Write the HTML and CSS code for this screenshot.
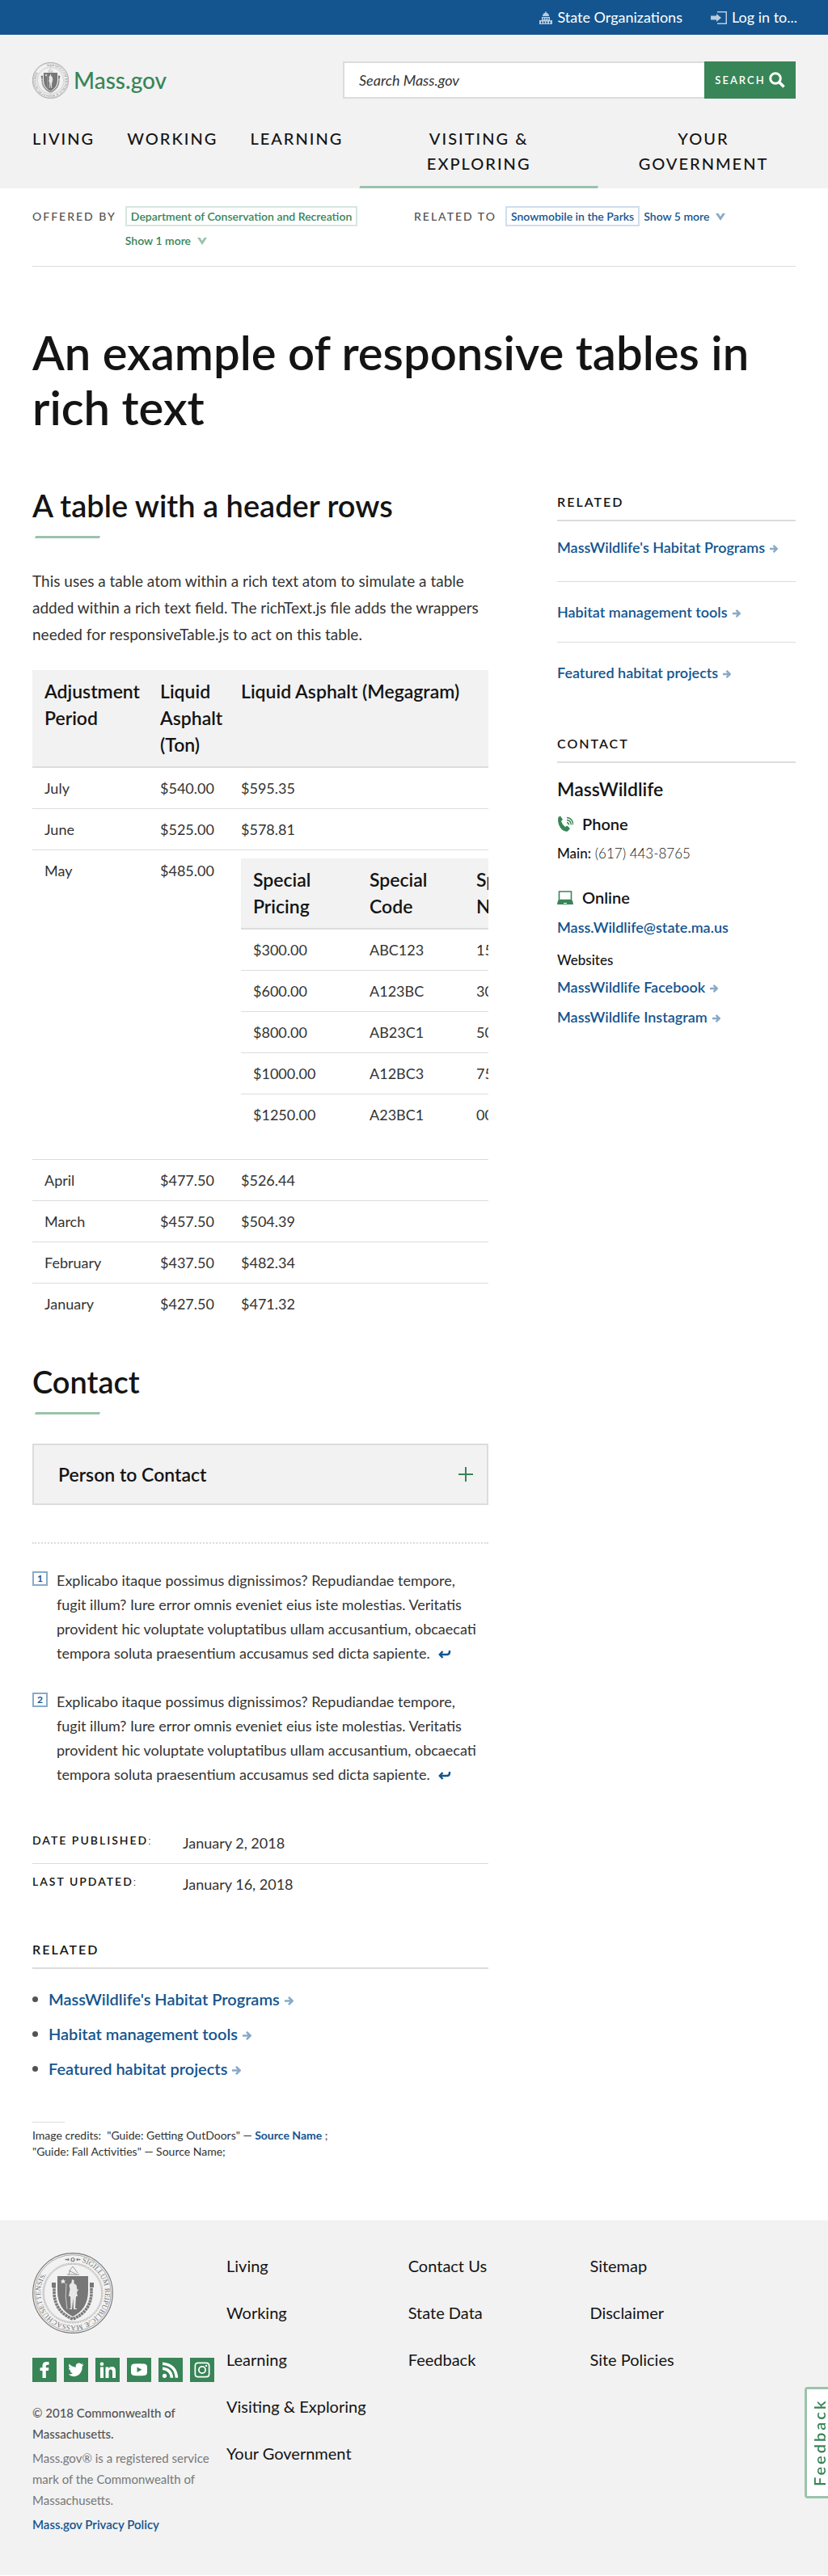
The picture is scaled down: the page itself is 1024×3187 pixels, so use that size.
FILE: index.html
```
<!DOCTYPE html>
<html lang="en">
<head>
<meta charset="utf-8">
<meta name="viewport" content="width=device-width, initial-scale=1">
<title>An example of responsive tables in rich text | Mass.gov</title>
<link rel="stylesheet" href="styles.css">
</head>
<body>
<svg class="sprite" aria-hidden="true">
  <symbol id="arrow" viewBox="0 0 10 10"><path d="M0 5h8M4.500.800 8.700 5l-4.200 4.200" fill="none" stroke="currentColor" stroke-width="2.400"/></symbol>
  <symbol id="chevron" viewBox="0 0 12 9"><path d="M0 0h3.500L6 4 8.500 0H12L6 9z" fill="currentColor"/></symbol>
  <symbol id="return" viewBox="0 0 16 11"><path d="M14 1v1.500Q14 6 10.500 6H3M5.500 2 1.800 6l3.700 4" fill="none" stroke="currentColor" stroke-width="2.400"/></symbol>
  <symbol id="seal" viewBox="0 0 100 100">
    <g fill="none" stroke="#7a7a7a">
      <circle cx="50" cy="50" r="49.300" stroke-width="1.200"/>
      <circle cx="50" cy="50" r="47.300" stroke-width=".6"/>
      <circle cx="50" cy="50" r="37" stroke-width=".8" stroke-dasharray="1 1"/>
      <circle cx="50" cy="50" r="35.800" stroke-width=".4"/>
      <path d="M27 37v14c1 16 10 26 23 31 13-5 22-15 23-31V37" stroke-width="3.600" stroke-dasharray="3 .7"/>
      <path d="M45 27q2-8 5-10l6 8M45 22l10 5M43 27h15" stroke-width=".7"/>
    </g>
    <path id="seal-ring" d="M61 11.600A40 40 0 0 1 50 90A40 40 0 0 1 40 11.300" fill="none"/>
    <text class="seal-text"><textPath href="#seal-ring">SIGILLUM REIPUBLICÆ MASSACHUSETTENSIS.</textPath></text>
    <path d="M41 8l4 1.500v-2L41 9zM59 8l-4 1.500v-2L59 9z" stroke="#7a7a7a" fill="#7a7a7a"/>
    <circle cx="50" cy="8.500" r="2" fill="none" stroke="#7a7a7a" stroke-width="1.200"/>
    <path d="M31 29h38v18c0 16-7 26-19 32-12-6-19-16-19-32z" fill="#777"/>
    <path d="M24 37h5v6h-5zM71 37h5v6h-5z" fill="#777"/>
    <path d="M38 32l1 2.500h2.500l-2 1.500 1 2.500-2.500-1.500-2.500 1.500 1-2.500-2-1.500H37z" fill="#f2f2f2"/>
    <path d="M49 33l2.500 1v4l3 2 1 6 2-1-2.500 4 1 5h-2l-1 15h2v1h-4l-.5-14-1.500 14h-3v-1h1.500l-.5-15h-2l1.500-9-1-5 3-3z" fill="#e8e8e8"/>
    <path d="M42 38q-2 16 1 32" fill="none" stroke="#ddd" stroke-width=".8"/>
  </symbol>
</svg>

<header class="site-header">
  <div class="utility">
    <a href="#"><svg class="utility-icon" width="16" height="16" viewBox="0 0 16 16" aria-hidden="true"><path fill="#b9cbdd" fill-rule="evenodd" d="M7.500 0h1v1.500Q12 2.500 12 6H4q0-3.500 3.500-4.500zM3 7h10v4h3v5H0v-5h3zm1.500 1.200v2h1.400v-2zm2.800 0v2h1.400v-2zm2.800 0v2h1.400v-2zM2 12.500V15h1.500v-2.500zm3.200 0V15h1.500v-2.500zm3.400 0V15H10v-2.500zm3.400 0V15h1.500v-2.500z"/></svg>State Organizations</a>
    <a href="#"><svg class="utility-icon" width="20" height="16" viewBox="0 0 20 16" aria-hidden="true"><path fill="#b9cbdd" d="M8 0h12v16H8v-1.500h10.500v-13H8zM0 5.500h7V3l6 5-6 5v-2.500H0z"/></svg>Log in to...</a>
  </div>
  <div class="masthead">
    <div class="brand-row">
      <a class="brand" href="#"><svg width="45" height="45" aria-hidden="true"><use href="#seal"/></svg>Mass.gov</a>
      <form class="search">
        <input type="search" aria-label="Search Mass.gov" placeholder="Search Mass.gov">
        <button type="button">SEARCH<svg width="20" height="20" viewBox="0 0 20 20" aria-hidden="true"><circle cx="8" cy="8" r="6.300" fill="none" stroke="#fff" stroke-width="3"/><path d="M12.500 12.500l6 6" stroke="#fff" stroke-width="3.600"/></svg></button>
      </form>
    </div>
    <nav class="main-nav" aria-label="Main">
      <a href="#">LIVING</a>
      <a href="#">WORKING</a>
      <a href="#">LEARNING</a>
      <a class="current" href="#"><span>VISITING &amp; EXPLORING</span></a>
      <a class="last" href="#"><span>YOUR GOVERNMENT</span></a>
    </nav>
  </div>
</header>

<main class="page">
  <div class="relations">
    <section class="relation offered">
      <h2>OFFERED BY</h2>
      <div class="tags">
        <a class="tag" href="#">Department of Conservation and Recreation</a>
        <button type="button">Show 1 more<svg width="12" height="9" aria-hidden="true"><use href="#chevron"/></svg></button>
      </div>
    </section>
    <section class="relation related-to">
      <h2>RELATED TO</h2>
      <div class="tags">
        <a class="tag" href="#">Snowmobile in the Parks</a>
        <button type="button">Show 5 more<svg width="12" height="9" aria-hidden="true"><use href="#chevron"/></svg></button>
      </div>
    </section>
  </div>

  <h1>An example of responsive tables in rich text</h1>

  <div class="columns">
    <div class="content">
      <h2 class="section-title">A table with a header rows</h2>
      <p class="intro">This uses a table atom within a rich text atom to simulate a table added within a rich text field. The richText.js file adds the wrappers needed for responsiveTable.js to act on this table.</p>
      <div class="table-wrap">
        <table class="data outer">
          <colgroup><col class="period"><col class="ton"><col></colgroup>
          <thead><tr><th>Adjustment Period</th><th>Liquid Asphalt (Ton)</th><th>Liquid Asphalt (Megagram)</th></tr></thead>
          <tbody>
            <tr><td>July</td><td>$540.00</td><td>$595.35</td></tr>
            <tr><td>June</td><td>$525.00</td><td>$578.81</td></tr>
            <tr><td>May</td><td>$485.00</td><td>
              <table class="data nested">
                <colgroup><col class="pricing"><col class="code"><col></colgroup>
                <thead><tr><th>Special Pricing</th><th>Special Code</th><th>Special Number</th></tr></thead>
                <tbody>
                  <tr><td>$300.00</td><td>ABC123</td><td>150</td></tr>
                  <tr><td>$600.00</td><td>A123BC</td><td>300</td></tr>
                  <tr><td>$800.00</td><td>AB23C1</td><td>500</td></tr>
                  <tr><td>$1000.00</td><td>A12BC3</td><td>750</td></tr>
                  <tr><td>$1250.00</td><td>A23BC1</td><td>000</td></tr>
                </tbody>
              </table>
            </td></tr>
            <tr><td>April</td><td>$477.50</td><td>$526.44</td></tr>
            <tr><td>March</td><td>$457.50</td><td>$504.39</td></tr>
            <tr><td>February</td><td>$437.50</td><td>$482.34</td></tr>
            <tr><td>January</td><td>$427.50</td><td>$471.32</td></tr>
          </tbody>
        </table>
      </div>

      <h2 class="section-title contact-title">Contact</h2>
      <button class="accordion" type="button" aria-expanded="false">Person to Contact<svg width="18" height="18" viewBox="0 0 18 18" aria-hidden="true"><path d="M0 9h18M9 0v18" stroke="#388557" stroke-width="2"/></svg></button>

      <ol class="footnotes">
        <li><a class="note-number" href="#">1</a><p>Explicabo itaque possimus dignissimos? Repudiandae tempore, fugit illum? Iure error omnis eveniet eius iste molestias. Veritatis provident hic voluptate voluptatibus ullam accusantium, obcaecati tempora soluta praesentium accusamus sed dicta sapiente. <a class="back" href="#" aria-label="Back to text"><svg width="16" height="11" aria-hidden="true"><use href="#return"/></svg></a></p></li>
        <li><a class="note-number" href="#">2</a><p>Explicabo itaque possimus dignissimos? Repudiandae tempore, fugit illum? Iure error omnis eveniet eius iste molestias. Veritatis provident hic voluptate voluptatibus ullam accusantium, obcaecati tempora soluta praesentium accusamus sed dicta sapiente. <a class="back" href="#" aria-label="Back to text"><svg width="16" height="11" aria-hidden="true"><use href="#return"/></svg></a></p></li>
      </ol>

      <table class="dates">
        <tr><th scope="row">DATE PUBLISHED<span>:</span></th><td>January 2, 2018</td></tr>
        <tr><th scope="row">LAST UPDATED<span>:</span></th><td>January 16, 2018</td></tr>
      </table>

      <h2 class="label-title">RELATED</h2>
      <ul class="related-list">
        <li><a class="go" href="#">MassWildlife's Habitat Programs<svg width="11" height="11" aria-hidden="true"><use href="#arrow"/></svg></a></li>
        <li><a class="go" href="#">Habitat management tools<svg width="11" height="11" aria-hidden="true"><use href="#arrow"/></svg></a></li>
        <li><a class="go" href="#">Featured habitat projects<svg width="11" height="11" aria-hidden="true"><use href="#arrow"/></svg></a></li>
      </ul>
      <div class="credits">
        <p>Image credits:&nbsp; "Guide: Getting OutDoors" — <a href="#">Source Name</a> ;</p>
        <p>"Guide: Fall Activities" — Source Name;</p>
      </div>
    </div>

    <aside class="sidebar">
      <h2 class="label-title">RELATED</h2>
      <ul class="side-links">
        <li><a class="go" href="#">MassWildlife's Habitat Programs<svg width="10" height="10" aria-hidden="true"><use href="#arrow"/></svg></a></li>
        <li><a class="go" href="#">Habitat management tools<svg width="10" height="10" aria-hidden="true"><use href="#arrow"/></svg></a></li>
        <li><a class="go" href="#">Featured habitat projects<svg width="10" height="10" aria-hidden="true"><use href="#arrow"/></svg></a></li>
      </ul>
      <h2 class="label-title">CONTACT</h2>
      <h3 class="org">MassWildlife</h3>
      <h4 class="method"><svg width="20" height="20" viewBox="0 0 20 20" aria-hidden="true"><path d="M1.500 2 4 .5 7 5 5 7q1.500 4.500 5 7l2.500-1.500L16 16l-3 3.500Q8 20.500 4 15 0 9 1.500 2z" fill="#388557"/><path d="M12 8.500q2.500.5 2.500 3M12 5.500q5 .5 5.500 6M12 2.500q7 .5 8 9" fill="none" stroke="#388557" stroke-width="1.400"/></svg>Phone</h4>
      <p class="detail phone"><strong>Main:</strong> (617) 443-8765</p>
      <h4 class="method online"><svg width="20" height="17" viewBox="0 0 20 17" aria-hidden="true"><path d="M2.500 1h15v10.500h-15z" fill="none" stroke="#388557" stroke-width="1.600"/><path d="M1 12h18l1 5H0z" fill="#388557"/><path d="M8 15h4v1H8z" fill="#fff"/></svg>Online</h4>
      <p class="detail"><a href="#">Mass.Wildlife@state.ma.us</a></p>
      <h5 class="sites">Websites</h5>
      <ul class="site-links">
        <li><a class="go" href="#">MassWildlife Facebook<svg width="10" height="10" aria-hidden="true"><use href="#arrow"/></svg></a></li>
        <li><a class="go" href="#">MassWildlife Instagram<svg width="10" height="10" aria-hidden="true"><use href="#arrow"/></svg></a></li>
      </ul>
    </aside>
  </div>
</main>

<footer class="site-footer">
  <div class="footer-grid">
    <div class="about">
      <svg class="footer-seal" width="100" height="100" role="img" aria-label="Seal of Massachusetts"><use href="#seal"/></svg>
      <div class="social">
        <a href="#" aria-label="Facebook"><svg viewBox="0 0 30 30"><path d="M12.500 25V16H9.500v-3.800h3V10q0-5 5-5h3v3.700h-2q-1.700 0-1.700 1.600v1.900h3.600L20 16h-3.200v9z"/></svg></a>
        <a href="#" aria-label="Twitter"><svg viewBox="0 0 30 30"><path d="M5.500 20.500q3.300.3 5.500-1.500-2.800-.3-3.600-2.800h1.700Q6 15 6 12.200l1.700.5Q5 10.500 6.600 7.500q3.300 4 8.200 4.200-.8-4 2.700-5 2.400-.5 4.100 1.200L24 7l-1.500 2.200 2-.4-1.800 2Q23 17 18.500 21q-6 4.500-13-.5z"/></svg></a>
        <a href="#" aria-label="LinkedIn"><svg viewBox="0 0 30 30"><path d="M6 11.500h4V25H6zM12.500 11.500h3.800v1.800q1.500-2.200 4.300-2.200 4.400 0 4.400 5.500V25h-4v-7.500q0-3-2.100-3-2.400 0-2.400 3.200V25h-4z"/><circle cx="8" cy="7.700" r="2.300"/></svg></a>
        <a href="#" aria-label="YouTube"><svg viewBox="0 0 30 30"><path fill-rule="evenodd" d="M8.500 7.500q6.500-.7 13 0 3.500.5 3.500 4v6.500q0 3.500-3.500 4-6.500.7-13 0-3.500-.5-3.500-4v-6.500q0-3.500 3.500-4zM12.500 11.500v6.500l6-3.200z"/></svg></a>
        <a href="#" aria-label="RSS"><svg viewBox="0 0 30 30"><circle cx="7.500" cy="22.300" r="2.600"/><path d="M5 11.500v3.600q9 .9 9.600 9.700h3.600Q17.300 12.500 5 11.500zM5 5.500v3.600q14.500 1.200 15.700 15.700H24.300Q23 7 5 5.500z"/></svg></a>
        <a href="#" aria-label="Instagram"><svg viewBox="0 0 30 30"><path fill-rule="evenodd" d="M10 5.500h10q4.500 0 4.500 4.500v10q0 4.500-4.500 4.500H10q-4.500 0-4.500-4.500V10q0-4.500 4.500-4.500zm0 1.700Q7.200 7.200 7.200 10v10q0 2.800 2.800 2.800h10q2.800 0 2.800-2.800V10q0-2.800-2.800-2.800zM15 10a5 5 0 1 1 0 10 5 5 0 0 1 0-10zm0 1.800a3.200 3.200 0 1 0 0 6.400 3.200 3.200 0 0 0 0-6.400z"/><circle cx="20" cy="9.900" r="1.200"/></svg></a>
      </div>
      <p class="copyright">© 2018 Commonwealth of Massachusetts.</p>
      <p class="mark">Mass.gov® is a registered service mark of the Commonwealth of Massachusetts.</p>
      <p class="privacy"><a href="#">Mass.gov Privacy Policy</a></p>
    </div>
    <nav aria-label="Topics"><a href="#">Living</a><a href="#">Working</a><a href="#">Learning</a><a href="#">Visiting &amp; Exploring</a><a href="#">Your Government</a></nav>
    <nav aria-label="Help"><a href="#">Contact Us</a><a href="#">State Data</a><a href="#">Feedback</a></nav>
    <nav aria-label="Site"><a href="#">Sitemap</a><a href="#">Disclaimer</a><a href="#">Site Policies</a></nav>
  </div>
</footer>
<button class="feedback" type="button">Feedback</button>
</body>
</html>
```
FILE: styles.css
```
* { box-sizing: border-box; }
body {
  margin: 0;
  color: #141414;
  background: #fff;
  font: 400 18px/33px Lato, "Noto Sans", sans-serif;
}
h1, h2, h3, h4, h5, p, ul, ol { margin: 0; padding: 0; }
ul, ol { list-style: none; }
a { color: #14558f; text-decoration: none; }
button { font: inherit; cursor: pointer; }
.sprite { position: absolute; width: 0; height: 0; }

/* Header */
.utility {
  display: flex;
  justify-content: flex-end;
  gap: 35px;
  height: 43px;
  padding: 0 38px;
  align-items: center;
  background: #14558f;
}
.utility a { display: flex; align-items: center; gap: 6px; color: #fff; }
.masthead { padding: 33px 40px 0; background: #f2f2f2; }
.brand-row { display: flex; justify-content: space-between; align-items: center; }
.brand {
  display: flex;
  align-items: center;
  gap: 6px;
  color: #388557;
  font-size: 28px;
  font-weight: 500;
}
.search { display: flex; width: 560px; height: 46px; }
.search input {
  flex: 1;
  min-width: 0;
  padding: 0 18px;
  border: 2px solid #dcdcdc;
  border-right: 0;
  border-radius: 0;
  background: #fff;
  font: italic 400 18px/24px Lato, "Noto Sans", sans-serif;
}
.search input::placeholder { color: #333; opacity: 1; }
.search button {
  display: flex;
  align-items: center;
  justify-content: center;
  gap: 4px;
  width: 113px;
  border: 0;
  background: #388557;
  color: #fff;
  font-size: 13px;
  font-weight: 600;
  letter-spacing: 2px;
}
.main-nav {
  display: grid;
  grid-template-columns: auto auto auto 298fr 246fr;
  margin-top: 34px;
}
.main-nav a {
  padding: 0 20px 12px;
  border-bottom: 3px solid transparent;
  color: #141414;
  font-size: 20px;
  font-weight: 500;
  line-height: 31px;
  letter-spacing: 2px;
  text-align: center;
}
.main-nav a:first-child { padding-left: 0; }
.main-nav .current { position: relative; }
.main-nav .current::after {
  content: "";
  position: absolute;
  right: 0;
  bottom: -3px;
  left: 0;
  height: 3px;
  background: #9bc3ab;
  clip-path: polygon(1px 0, 100% 0, calc(100% - 1px) 100%, 0 100%);
}
.main-nav span { display: inline-block; max-width: 170px; }
.main-nav .last { padding-right: 4px; }

/* Offered by and related to */
.page { padding: 0 40px 75px; }
.relations {
  display: grid;
  grid-template-columns: 472px 1fr;
  padding: 22px 0 19px;
  border-bottom: 1px solid #dcdcdc;
}
.relation { display: flex; align-items: flex-start; gap: 11px; }
.relation h2 {
  flex: none;
  color: #535353;
  font-size: 14px;
  font-weight: 500;
  line-height: 26px;
  letter-spacing: 2px;
}
.offered { padding-right: 60px; }
.tags { display: flex; flex-wrap: wrap; gap: 5px; }
.tag {
  padding: 0 5px;
  border: 2px solid #d7e7dd;
  color: #388557;
  font-size: 14px;
  font-weight: 600;
  line-height: 21px;
}
.tags button {
  padding: 0;
  border: 0;
  background: none;
  color: #388557;
  font-size: 14px;
  font-weight: 600;
  line-height: 25px;
}
.tags svg { margin-left: 8px; color: #9bc3ab; }
.related-to .tag { border-color: #d0ddee; color: #14558f; }
.related-to button { color: #14558f; }
.related-to svg { color: #89aac7; }

h1 {
  margin: 72px 0 67px;
  font-size: 58px;
  font-weight: 600;
  line-height: 68px;
}
.columns { display: grid; grid-template-columns: 1fr 295px; gap: 85px; }
.content { min-width: 0; }
.section-title { font-size: 38px; font-weight: 600; line-height: 40px; }
.section-title::after {
  content: "";
  display: block;
  width: 81px;
  height: 3px;
  margin: 18px 0 36px 3px;
  background: #9bc3ab;
  clip-path: polygon(1px 0, 100% 0, calc(100% - 1px) 100%, 0 100%);
}
.intro { margin-bottom: 28px; color: #333; font-size: 19px; }

/* Data tables */
.table-wrap { overflow-x: auto; scrollbar-width: none; }
.data {
  width: 100%;
  border-collapse: separate;
  border-spacing: 0;
  table-layout: fixed;
}
.outer { min-width: 680px; }
.period { width: 158px; }
.ton { width: 100px; }
.pricing { width: 159px; }
.code { width: 132px; }
.data th {
  padding: 10px 10px 10px 0;
  border-bottom: 2px solid #dcdcdc;
  background: #f2f2f2;
  color: #141414;
  font-size: 23px;
  font-weight: 600;
  text-align: left;
  vertical-align: top;
}
.data td {
  padding: 9px 0 8px;
  border-bottom: 1px solid #dcdcdc;
  color: #333;
  vertical-align: top;
}
.data th:first-child, .data td:first-child { padding-left: 15px; }
.data tbody tr:last-child > td { border-bottom: 0; }
.nested { margin: 1px 0 22px; }

.contact-title { margin-top: 51px; }
.accordion {
  display: flex;
  align-items: center;
  justify-content: space-between;
  width: 100%;
  height: 76px;
  padding: 0 17px 0 30px;
  border: 2px solid #dcdcdc;
  background: #f2f2f2;
  color: #141414;
  font-size: 23px;
  font-weight: 600;
}

.footnotes {
  display: grid;
  gap: 30px;
  margin-top: 46px;
  padding: 30px 15px 0 0;
  border-top: 2px dotted #dcdcdc;
  color: #333;
  line-height: 30px;
}
.footnotes li { display: grid; grid-template-columns: 30px 1fr; align-items: start; }
.note-number {
  justify-self: start;
  margin-top: 4px;
  padding: 0 4px;
  border: 2px solid #89aac7;
  font-size: 12px;
  font-weight: 700;
  line-height: 14px;
}
.back { margin-left: 6px; }

.dates { width: 100%; margin-top: 45px; border-collapse: separate; border-spacing: 0; }
.dates th {
  width: 186px;
  padding: 9px 0;
  font-size: 14px;
  font-weight: 600;
  line-height: 26px;
  letter-spacing: 2px;
  text-align: left;
  vertical-align: top;
}
.dates th span { font-weight: 300; }
.dates td { padding: 9px 0 8px; color: #333; }
.dates tr:first-child > * { border-bottom: 1px solid #dcdcdc; }

.label-title {
  margin-top: 44px;
  padding-bottom: 10px;
  border-bottom: 2px solid #dcdcdc;
  font-size: 16px;
  font-weight: 600;
  line-height: 24px;
  letter-spacing: 2px;
}
.go { font-weight: 600; }
.go svg { margin-left: 6px; color: #89aac7; }
.related-list { margin-top: 16px; font-size: 20px; line-height: 43px; }
.related-list li { display: flex; align-items: center; gap: 13px; }
.related-list li::before {
  content: "";
  width: 7px;
  height: 7px;
  border-radius: 50%;
  background: #535353;
}
.credits { margin-top: 44px; color: #333; font-size: 14px; line-height: 20px; }
.credits::before {
  content: "";
  display: block;
  width: 40px;
  margin-bottom: 6px;
  border-top: 1px solid #dcdcdc;
}
.credits a { font-weight: 700; }

/* Sidebar */
.sidebar { padding-top: 4px; }
.sidebar .label-title { margin-top: 0; }
.side-links { margin-bottom: 39px; }
.side-links li { padding: 25px 0 24px; border-bottom: 1px solid #dcdcdc; line-height: 25px; }
.side-links li:first-child { padding: 20px 0 29px; }
.side-links li:last-child { border-bottom: 0; }
.org { margin-top: 16px; font-size: 23px; font-weight: 600; line-height: 33px; }
.method {
  display: flex;
  align-items: center;
  gap: 11px;
  margin-top: 11px;
  font-size: 20px;
  font-weight: 600;
  line-height: 30px;
}
.online { margin-top: 24px; }
.detail { margin-top: 7px; line-height: 30px; }
.detail a { font-weight: 600; }
.phone { font-size: 17px; font-weight: 300; }
.phone strong { font-weight: 500; }
.sites { margin-top: 11px; font-size: 17px; font-weight: 500; line-height: 30px; }
.site-links { line-height: 37px; }

/* Footer */
.site-footer { padding: 40px 40px 50px; background: #f2f2f2; }
.footer-grid {
  display: grid;
  grid-template-columns: 225fr 210fr 210fr 255fr;
  gap: 15px;
}
.footer-seal { display: block; }
.seal-text { fill: #777; font: 9px "Liberation Serif", serif; }
.social { display: flex; gap: 9px; margin-top: 30px; }
.social a { width: 30px; height: 30px; background: #388557; fill: #fff; }
.social svg { display: block; }
.about p { font-size: 15px; font-weight: 500; line-height: 26px; }
.about .copyright { margin-top: 25px; color: #535353; }
.about .mark { margin-top: 4px; color: #777; font-weight: 400; }
.about .privacy { margin-top: 4px; }
.about .privacy a { font-weight: 600; }
.site-footer nav { display: grid; gap: 25px; align-content: start; }
.site-footer nav a { color: #141414; font-size: 20px; }

.feedback {
  position: fixed;
  right: -4px;
  bottom: 96px;
  width: 33px;
  height: 138px;
  padding: 0;
  border: 3px solid #9bc3ab;
  border-left: 0;
  border-radius: 0 4px 4px 0;
  background: #fff;
  color: #388557;
  font-size: 20px;
  font-weight: 600;
  line-height: 20px;
  letter-spacing: 3px;
  writing-mode: vertical-rl;
  transform: rotate(180deg);
}
```
